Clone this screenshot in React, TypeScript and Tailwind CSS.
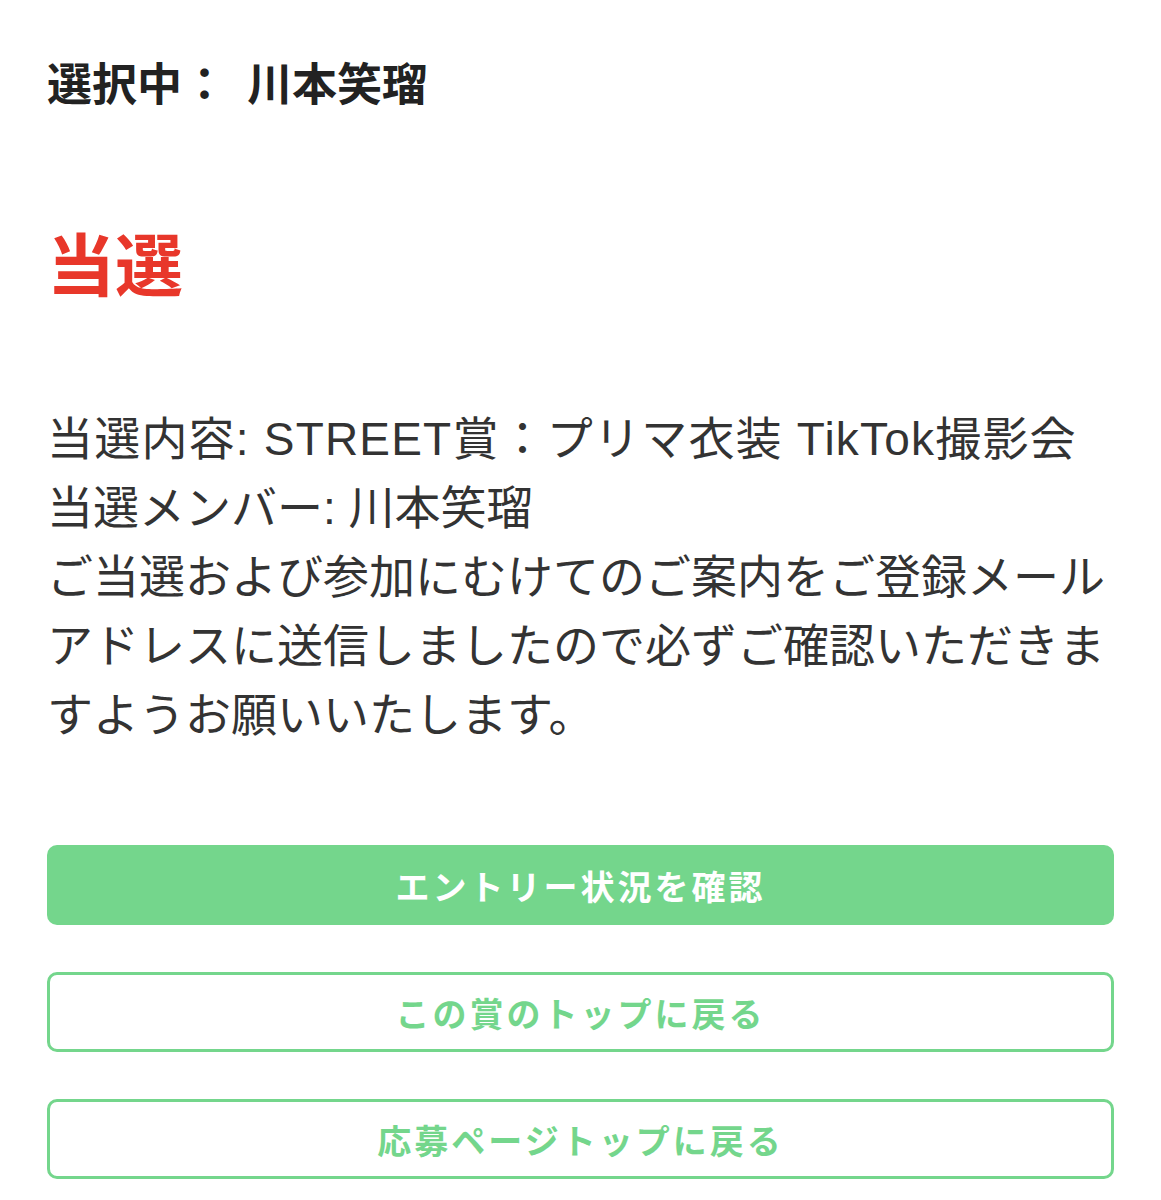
const font = { fontFamily: '"Noto Sans CJK JP", "Noto Sans", sans-serif' };
const bodyFont = { fontFamily: '"Liberation Sans", "Noto Sans CJK JP", sans-serif' };

export default function App() {
  return (
    <div className="min-h-[1200px] bg-white px-[47px] pt-[48px]" style={font}>
      <h2 className="text-[45px] leading-[68px] font-bold text-[#222222]">
        選択中：<span className="ml-[20px]">川本笑瑠</span>
      </h2>

      <h1 className="mt-[96px] text-[68px] leading-[100px] font-bold text-[#e8372a]">
        当選
      </h1>

      <div className="mt-[93px] text-[46px] leading-[69px] text-[#333333]" style={bodyFont}>
        <p className="whitespace-nowrap tracking-[1.2px]">
          当選内容: STREET賞：プリマ衣装 TikTok撮影会
        </p>
        <p className="whitespace-nowrap">当選メンバー: 川本笑瑠</p>
        <p className="whitespace-nowrap">ご当選および参加にむけてのご案内をご登録メール</p>
        <p className="whitespace-nowrap">アドレスに送信しましたので必ずご確認いただきま</p>
        <p className="whitespace-nowrap">すようお願いいたします。</p>
      </div>

      <div className="mt-[95px] flex flex-col gap-[47px]">
        <button className="h-[80px] w-full rounded-[10px] bg-[#74d68c] text-[34px] font-bold tracking-[3px] text-white">
          エントリー状況を確認
        </button>
        <button className="h-[80px] w-full rounded-[10px] border-[3px] border-[#74d68c] bg-white text-[34px] font-bold tracking-[3px] text-[#74d68c]">
          この賞のトップに戻る
        </button>
        <button className="h-[80px] w-full rounded-[10px] border-[3px] border-[#74d68c] bg-white text-[34px] font-bold tracking-[3px] text-[#74d68c]">
          応募ページトップに戻る
        </button>
      </div>
    </div>
  );
}
